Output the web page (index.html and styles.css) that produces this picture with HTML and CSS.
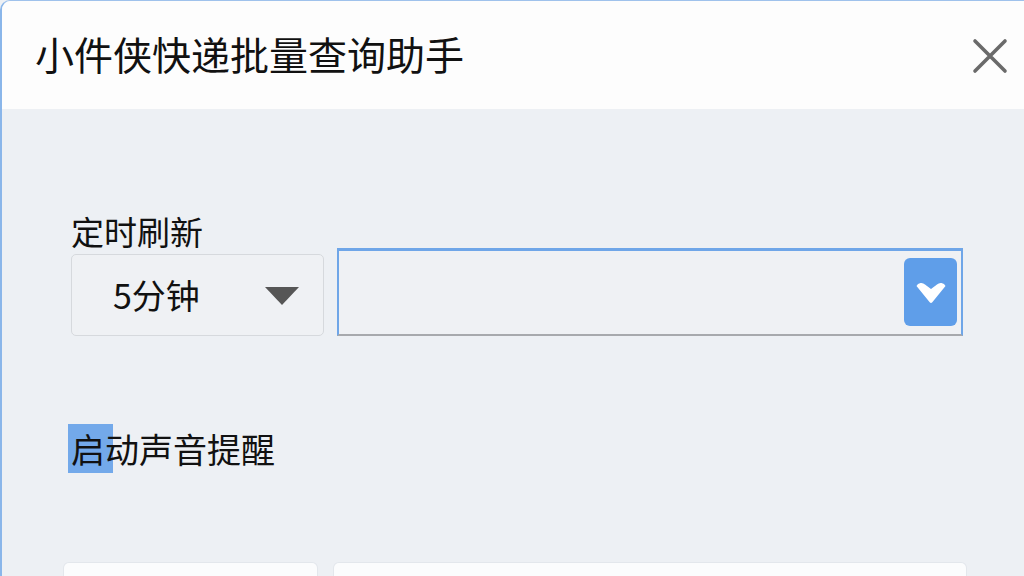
FILE: index.html
```html
<!DOCTYPE html>
<html lang="zh-CN">
<head>
<meta charset="utf-8">
<title>小件侠快递批量查询助手</title>
<link rel="stylesheet" href="styles.css">
</head>
<body>
<div class="window">
  <header class="titlebar">
    <h1 class="title">小件侠快递批量查询助手</h1>
    <button class="close" aria-label="关闭">
      <svg width="36" height="36" viewBox="0 0 36 36"><path d="M3 3 L33 33 M33 3 L3 33" stroke="#6a6a6a" stroke-width="3.6" stroke-linecap="round" fill="none"/></svg>
    </button>
  </header>
  <main class="content">
    <div class="label">定时刷新</div>
    <div class="row">
      <div class="select">
        <span class="select-text">5分钟</span>
        <svg class="tri" width="34" height="18" viewBox="0 0 34 18"><path d="M0 0 H34 L17 18 Z" fill="#565656"/></svg>
      </div>
      <div class="combo">
        <button class="combo-btn" aria-label="展开">
          <svg width="30" height="22" viewBox="0 0 30 22"><path d="M0.5 4 Q1.5 1.5 4.5 1 Q7 0.6 9 2.5 L15 7 L21 2.5 Q23 0.6 25.5 1 Q28.5 1.5 29.5 4 L16.3 20.3 Q15 21.8 13.7 20.3 Z" fill="#ffffff"/></svg>
        </button>
      </div>
    </div>
    <div class="label2"><span class="hl">启</span>动声音提醒</div>
    <div class="bottom-row">
      <div class="card card-a"></div>
      <div class="card card-b"></div>
    </div>
  </main>
</div>
</body>
</html>
```

FILE: styles.css
```css
html, body {
  margin: 0;
  padding: 0;
  width: 1024px;
  height: 576px;
  overflow: hidden;
  background: #edf0f4;
  font-family: "Noto Sans CJK SC", "Noto Sans", sans-serif;
  color: #141414;
}

.window {
  width: 1024px;
  height: 576px;
  box-sizing: border-box;
  border-left: 2px solid #8ab6ea;
  border-top: 1px solid #9fc2ec;
  border-top-left-radius: 10px;
  background: #edf0f4;
  overflow: hidden;
}

.titlebar {
  height: 108px;
  background: #fdfdfd;
  display: flex;
  align-items: center;
  justify-content: space-between;
  padding: 0 16px 0 33px;
}

.title {
  margin: 0;
  font-size: 39px;
  font-weight: 400;
  line-height: 1;
  color: #111111;
  position: relative;
  top: -2px;
}

.close {
  border: 0;
  background: transparent;
  padding: 0;
  width: 36px;
  height: 36px;
  display: flex;
  position: relative;
  top: 1px;
}

.content {
  display: flex;
  flex-direction: column;
  padding: 105px 0 0 69px;
}

.label {
  font-size: 33px;
  font-weight: 400;
  line-height: 34px;
  height: 34px;
  color: #111111;
}

.row {
  display: flex;
  align-items: flex-end;
  gap: 13px;
}

.select {
  box-sizing: border-box;
  width: 253px;
  height: 82px;
  border: 1px solid #d6d9dd;
  border-radius: 5px;
  background: #eff1f4;
  display: flex;
  align-items: center;
  justify-content: space-between;
  padding: 0 24px 0 41px;
}

.select-text {
  font-size: 34px;
  font-weight: 400;
  line-height: 1;
  color: #111111;
}

.tri {
  margin-top: 2px;
}

.combo {
  box-sizing: border-box;
  width: 626px;
  height: 88px;
  border: 2px solid #6fa6e8;
  border-top-width: 3px;
  border-bottom: 2px solid #a7a9ad;
  background: #eff1f4;
  display: flex;
  align-items: center;
  justify-content: flex-end;
  padding: 0 4px 1px 0;
}

.combo-btn {
  border: 0;
  padding: 0;
  width: 53px;
  height: 68px;
  border-radius: 6px;
  background: #5f9ee9;
  display: flex;
  align-items: center;
  justify-content: center;
}

.combo-btn svg {
  margin-top: 2px;
}

.label2 {
  margin-top: 88px;
  font-size: 34px;
  font-weight: 400;
  line-height: 50px;
  height: 50px;
  color: #111111;
}

.hl {
  background: #73a9ea;
  padding: 0 8px 0 3px;
  margin: 0 -8px 0 -3px;
}

.bottom-row {
  display: flex;
  gap: 17px;
  margin-top: 89px;
  margin-left: -7px;
}

.card {
  height: 40px;
  background: #fbfcfd;
  border-radius: 5px 5px 0 0;
  box-shadow: 0 0 0 1px #e3e7ec;
}

.card-a { width: 253px; }
.card-b { width: 632px; }
```
